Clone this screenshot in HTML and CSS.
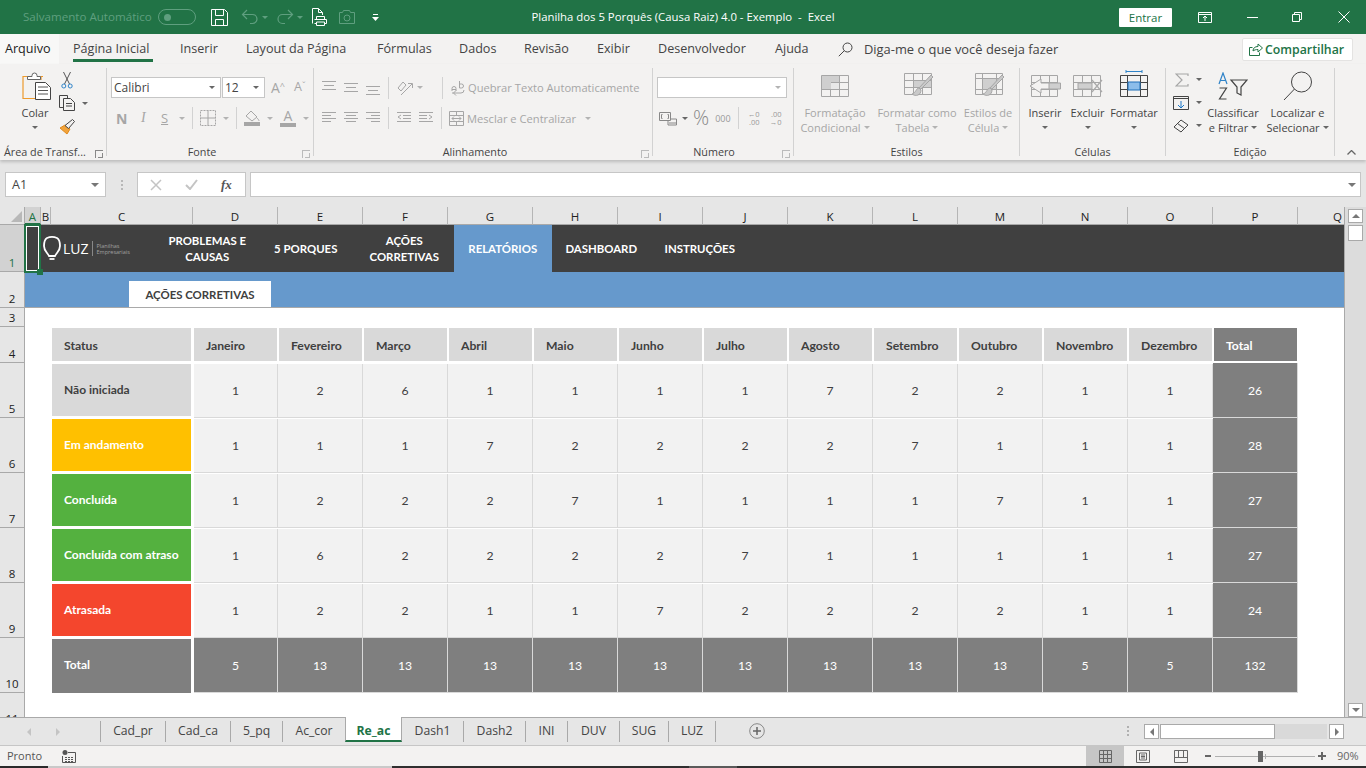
FILE: index.html
```html
<!DOCTYPE html>
<html lang="pt-BR">
<head>
    <meta charset="UTF-8">
    <title>Planilha dos 5 Porquês (Causa Raiz) 4.0 - Exemplo - Excel</title>
    <link rel="stylesheet" href="styles.css">
</head>
<body>
<div class="app">
    <!-- barra de titulo -->
    <header class="titlebar">
        <div class="qat">
            <span class="autosave">Salvamento Automático</span>
            <span class="toggle"><i></i></span>
            <svg class="q-save" width="17" height="17" viewBox="0 0 17 17" fill="none" stroke="#fff"><path d="M.5.5h13l3 3v13H.5z"/><path d="M4.500.5v6h8v-6M4.500 16.500v-6h8v6"/></svg>
            <svg class="q-undo" width="18" height="16" viewBox="0 0 18 16" fill="none" stroke="#5f9f7f" stroke-width="1.2"><path d="M6 1L1.500 5.500 6 10M1.500 5.500h10a4.500 4.500 0 0 1 0 9H9"/></svg>
            <span class="caret faded"></span>
            <svg class="q-redo" width="18" height="16" viewBox="0 0 18 16" fill="none" stroke="#5f9f7f" stroke-width="1.2"><path d="M12 1l4.500 4.500L12 10M16.500 5.500h-10a4.500 4.500 0 0 0 0 9H9"/></svg>
            <span class="caret faded"></span>
            <svg class="q-print" width="16" height="18" viewBox="0 0 16 18" fill="none" stroke="#fff"><path d="M.5 15.500V.5h6l4 4V7M6.500.5v4h4"/><path d="M4.500 8.500h8v3h-8zM2.500 11.500h12v4h-2M4.500 15.500h-2M4.500 14h8v3.500h-8z" fill="#217346"/></svg>
            <svg class="q-cam" width="16" height="14" viewBox="0 0 16 14" fill="none" stroke="#5f9f7f"><path d="M.5 2.500h3l1-2h6l1 2h4v11H.5z"/><circle cx="8" cy="8" r="3"/></svg>
            <svg class="q-more" width="7" height="7" viewBox="0 0 7 7" fill="#fff"><path d="M1 0h5v1H1zM0 3h7L3.500 7z"/></svg>
        </div>
        <div class="doc-title">Planilha dos 5 Porquês (Causa Raiz) 4.0 - Exemplo &nbsp;-&nbsp; Excel</div>
        <div class="win">
            <button class="signin">Entrar</button>
            <svg class="w-disp" width="14" height="11" viewBox="0 0 14 11" fill="none" stroke="#fff"><path d="M.5.5h13v10H.5zM.5 2.500h13M7 9V4.500M5 6l2-2 2 2"/></svg>
            <svg class="w-min" width="11" height="1" viewBox="0 0 11 1" stroke="#fff"><path d="M0 .5h11"/></svg>
            <svg class="w-max" width="10" height="10" viewBox="0 0 10 10" fill="none" stroke="#fff"><path d="M.5 2.500h7v7h-7zM2.500 2.500v-2h7v7h-2"/></svg>
            <svg class="w-close" width="12" height="12" viewBox="0 0 12 12" stroke="#fff"><path d="M.5.5l11 11M11.500.5l-11 11"/></svg>
        </div>
    </header>

    <!-- abas do ribbon -->
    <nav class="tabs">
        <a class="tab file">Arquivo</a>
        <a class="tab on">Página Inicial</a>
        <a class="tab">Inserir</a>
        <a class="tab">Layout da Página</a>
        <a class="tab">Fórmulas</a>
        <a class="tab">Dados</a>
        <a class="tab">Revisão</a>
        <a class="tab">Exibir</a>
        <a class="tab">Desenvolvedor</a>
        <a class="tab">Ajuda</a>
        <span class="tell">
            <svg width="15" height="15" viewBox="0 0 15 15" fill="none" stroke="#444"><circle cx="9.500" cy="5.500" r="4.500"/><path d="M6.300 8.700L.8 14.200"/></svg>
            Diga-me o que você deseja fazer
        </span>
        <button class="share">
            <svg width="14" height="13" viewBox="0 0 14 13" fill="none" stroke="#217346"><path d="M3.500 4.500H.5v8h10v-3"/><path d="M4 8c0-3 2-4.500 5-4.500V1l4.500 4-4.500 4V6.500C7 6.500 5 7 4 8z"/></svg>
            Compartilhar
        </button>
    </nav>

    <!-- ribbon -->
    <section class="ribbon">
        <div class="group g-clip">
            <div class="body">
                <div class="big paste">
                    <svg width="29" height="28" viewBox="0 0 29 28" fill="none"><path d="M8 4.500H1v22h13" stroke="#ed9a2d" stroke-width="1.200"/><path d="M21 4.500h-2V8" stroke="#ed9a2d" stroke-width="1.200"/><path d="M5.500 7.500h13v-3h-3.500v-1a2.500 2.500 0 0 0-5 0v1H5.500z" fill="#fff" stroke="#666"/><path d="M13.500 10.500h10l5 5v12h-15z" fill="#fff" stroke="#444"/><path d="M16 15h10M16 18.500h10M16 22h10" stroke="#555"/></svg>
                    <span class="lbl">Colar</span>
                    <span class="caret"></span>
                </div>
                <div class="clip-small">
                    <svg class="s-cut" width="12" height="17" viewBox="0 0 12 17" fill="none"><path d="M2.500 0l6 12M9.500 0l-6 12" stroke="#555"/><circle cx="2.800" cy="14" r="2" stroke="#2f83c8"/><circle cx="9.200" cy="14" r="2" stroke="#2f83c8"/></svg>
                    <span class="s-copy"><svg width="17" height="16" viewBox="0 0 17 16" fill="none" stroke="#444"><path d="M4.500 12.500H.5V.5h8v3"/><path d="M4.500 3.500h7l4 4v8h-11z" fill="#f3f2f1"/><path d="M7 8.500h6M7 11h6"/></svg><span class="caret"></span></span>
                    <svg class="s-brush" width="17" height="16" viewBox="0 0 17 16" fill="none"><path d="M1 9l7 6 3-5-5-4z" fill="#f2a33a" stroke="#e08a1e"/><path d="M6 6.500l3.500 3 6-7-2-2z" fill="#f3f2f1" stroke="#444"/></svg>
                </div>
            </div>
            <div class="glabel"><span>Área de Transf...</span><i class="launch"></i></div>
        </div>

        <div class="group g-font">
            <div class="body stack">
                <div class="row r-top">
                    <span class="combo c-font">Calibri<span class="caret"></span></span>
                    <span class="combo c-size">12<span class="caret"></span></span>
                    <span class="grow-a">A<sup>^</sup></span>
                    <span class="shrink-a">A<sup>ˇ</sup></span>
                </div>
                <div class="row r-bot font-tools">
                    <b class="t-n">N</b>
                    <em class="t-i">I</em>
                    <u class="t-s">S</u><span class="caret light"></span>
                    <i class="sep"></i>
                    <svg width="16" height="16" viewBox="0 0 16 16" fill="none" stroke="#a6a6a6"><path d="M.5.5h15v15H.5z" stroke-dasharray="2 1"/><path d="M8 .5v15M.5 8h15"/></svg><span class="caret light"></span>
                    <i class="sep"></i>
                    <span class="swatch"><svg width="16" height="12" viewBox="0 0 16 12" fill="none" stroke="#a6a6a6"><path d="M7 1l6 6-5 4-6-5zM13 8c1 1 2 2 2 3"/></svg><i></i></span><span class="caret light"></span>
                    <span class="swatch letter">A<i></i></span><span class="caret light"></span>
                </div>
            </div>
            <div class="glabel"><span>Fonte</span><i class="launch dim"></i></div>
        </div>

        <div class="group g-align">
            <div class="body stack">
                <div class="row r-top">
                    <svg class="al" width="14" height="16" viewBox="0 0 14 16" stroke="#a6a6a6"><path d="M0 1.500h14M2 5.500h10M0 9.500h14"/></svg>
                    <svg class="al" width="14" height="16" viewBox="0 0 14 16" stroke="#a6a6a6"><path d="M0 3.500h14M2 7.500h10M0 11.500h14"/></svg>
                    <svg class="al" width="14" height="16" viewBox="0 0 14 16" stroke="#a6a6a6"><path d="M0 6.500h14M2 10.500h10M0 14.500h14"/></svg>
                    <i class="sep"></i>
                    <svg class="orient" width="16" height="16" viewBox="0 0 16 16" fill="none" stroke="#a6a6a6"><path d="M1 8l5-6 3 3-5 6zM4 15L15 4M11 3.500h4.500V8"/></svg><span class="caret light"></span>
                    <i class="sep s-wrap"></i>
                    <span class="wide wrap">
                        <svg width="15" height="16" viewBox="0 0 15 16" fill="none" stroke="#a6a6a6"><path d="M1 11V8.500a2 2 0 0 1 4 0V11M1 9.500h4M8.500 1v7h2a2 2 0 0 0 0-4h-2M1 13h9a3 3 0 0 0 3-3M5 15.500L2.500 13 5 10.500"/></svg>
                        Quebrar Texto Automaticamente
                    </span>
                </div>
                <div class="row r-bot">
                    <svg class="al" width="14" height="14" viewBox="0 0 14 14" stroke="#a6a6a6"><path d="M0 1.500h14M0 4.500h9M0 7.500h14M0 10.500h9"/></svg>
                    <svg class="al" width="14" height="14" viewBox="0 0 14 14" stroke="#a6a6a6"><path d="M0 1.500h14M2 4.500h10M0 7.500h14M2 10.500h10"/></svg>
                    <svg class="al" width="14" height="14" viewBox="0 0 14 14" stroke="#a6a6a6"><path d="M0 1.500h14M5 4.500h9M0 7.500h14M5 10.500h9"/></svg>
                    <i class="sep"></i>
                    <svg class="ind" width="14" height="14" viewBox="0 0 14 14" fill="none" stroke="#a6a6a6"><path d="M0 1.500h14M6 4.500h8M6 7.500h8M0 10.500h14M4 4L1 6l3 2"/></svg>
                    <svg class="ind" width="14" height="14" viewBox="0 0 14 14" fill="none" stroke="#a6a6a6"><path d="M0 1.500h14M0 4.500h8M0 7.500h8M0 10.500h14M10 4l3 2-3 2"/></svg>
                    <i class="sep"></i>
                    <span class="wide merge">
                        <svg width="15" height="15" viewBox="0 0 15 15" fill="none" stroke="#a6a6a6"><path d="M.5.5h14v14H.5zM.5 4.500h14M.5 10.500h14M7.500.5v4M7.500 10.500v4M3 7.500h9M5 5.500l-2 2 2 2M10 5.500l2 2-2 2"/></svg>
                        Mesclar e Centralizar
                        <span class="caret light"></span>
                    </span>
                </div>
            </div>
            <div class="glabel"><span>Alinhamento</span><i class="launch dim"></i></div>
        </div>

        <div class="group g-num">
            <div class="body stack">
                <div class="row r-top"><span class="combo c-num"><span class="caret light"></span></span></div>
                <div class="row r-bot num-tools">
                    <svg width="18" height="15" viewBox="0 0 18 15" fill="none" stroke="#888"><path d="M.5 1.500h11v8H.5zM3.500 3.500h-1v4h1M8.500 3.500h1v4h-1M12 8h5.500v6H9v-4"/><path d="M10 12h7"/></svg><span class="caret"></span>
                    <span class="pct">%</span>
                    <span class="kilo">000</span>
                    <i class="sep"></i>
                    <span class="dec"><span>←0</span><span>.00</span></span>
                    <span class="dec"><span>.00</span><span>→0</span></span>
                </div>
            </div>
            <div class="glabel"><span>Número</span><i class="launch dim"></i></div>
        </div>

        <div class="group g-styles">
            <div class="body bigs">
                <div class="big off b-cond">
                    <svg width="28" height="22" viewBox="0 0 28 22" fill="none" stroke="#a6a6a6"><path d="M.5.500h27v21H.5zM.5 7.500h27M.5 14.500h27M9.500.5v21M18.500.5v21"/><path d="M1 1h17v6h-8v7H1z" fill="#cfcfcf" stroke="none"/><path d="M10 8h8v6h-8z" fill="#e8e8e8" stroke="none"/></svg>
                    <span class="lbl">Formatação</span>
                    <span class="lbl">Condicional<span class="caret light"></span></span>
                </div>
                <div class="big off b-table">
                    <svg width="30" height="25" viewBox="0 0 30 25" fill="none" stroke="#a6a6a6"><path d="M.5.500h27v21H.5zM.5 7.500h27M.5 14.500h27M9.500.5v21M18.500.5v21"/><path d="M10 8h17v6H10z" fill="#cfcfcf" stroke="none"/><path d="M29 4L17 16l-2-1L27 2zM15 15c-3 0-3 5-7 6 4 3 9 1 9-4z" fill="#c9c9c9"/></svg>
                    <span class="lbl">Formatar como</span>
                    <span class="lbl">Tabela<span class="caret light"></span></span>
                </div>
                <div class="big off b-cell">
                    <svg width="30" height="25" viewBox="0 0 30 25" fill="none" stroke="#a6a6a6"><path d="M.5.500h27v21H.5zM.5 5.500h27M.5 16.500h27M7.500.5v21M21.500.5v21"/><path d="M8 6h13v10H8z" fill="#cfcfcf" stroke="none"/><path d="M29 4L17 16l-2-1L27 2zM15 15c-3 0-3 5-7 6 4 3 9 1 9-4z" fill="#c9c9c9"/></svg>
                    <span class="lbl">Estilos de</span>
                    <span class="lbl">Célula<span class="caret light"></span></span>
                </div>
            </div>
            <div class="glabel"><span>Estilos</span></div>
        </div>

        <div class="group g-cells">
            <div class="body bigs">
                <div class="big b-ins">
                    <svg width="32" height="22" viewBox="0 0 32 22" fill="none" stroke="#a6a6a6"><path d="M2.500.5h26v21h-26zM2.500 7.500h26M2.500 14.500h26M11.500.5v21M20.500.5v21"/><path d="M12 8h19.500v6H12z" fill="#cfcfcf"/><path d="M12 4L1 11l11 7v-4h8V8h-8z" fill="#f3f2f1"/></svg>
                    <span class="lbl">Inserir</span>
                    <span class="caret"></span>
                </div>
                <div class="big b-del">
                    <svg width="30" height="22" viewBox="0 0 30 22" fill="none" stroke="#a6a6a6"><path d="M.5.5h27v21H.5zM.5 7.500h27M.5 14.500h27M9.500.5v21M18.500.5v21"/><path d="M5 8h14v6H5z" fill="#cfcfcf"/><path d="M19 5l10 12M29 5L19 17" stroke="#aaa" stroke-width="1.200"/></svg>
                    <span class="lbl">Excluir</span>
                    <span class="caret"></span>
                </div>
                <div class="big b-fmt">
                    <svg width="28" height="27" viewBox="0 0 28 27" fill="none" stroke="#444"><path d="M6 1.500h16M6 0v3M22 0v3" stroke="#2f83c8"/><path d="M.5 5.500h27v21H.5zM.5 12.500h27M.5 19.500h27M7.500 5.500v21M20.500 5.500v21"/><path d="M8 12h12v8H8z" fill="#8cbdea" stroke="#1e6fb8"/></svg>
                    <span class="lbl">Formatar</span>
                    <span class="caret"></span>
                </div>
            </div>
            <div class="glabel"><span>Células</span></div>
        </div>

        <div class="group g-edit">
            <div class="body bigs">
                <div class="edit-small">
                    <span class="e-row e-sum"><svg width="14" height="14" viewBox="0 0 14 14" fill="none" stroke="#a6a6a6" stroke-width="1.200"><path d="M13 3V1H1l6 6-6 6h12v-2"/></svg><span class="caret"></span></span>
                    <span class="e-row"><svg width="16" height="14" viewBox="0 0 16 14" fill="none"><path d="M.5.500h15v13H.5z" stroke="#444"/><path d="M.5 2.500h15" stroke="#444"/><path d="M8 5v7M5 9l3 3 3-3" stroke="#1e78c8"/></svg><span class="caret"></span></span>
                    <span class="e-row"><svg width="16" height="14" viewBox="0 0 16 14" fill="none" stroke="#444"><path d="M1 8l7-7 7 5-7 7zM4.500 4.500l7 5"/></svg><span class="caret"></span></span>
                </div>
                <div class="big b-sort">
                    <svg width="30" height="28" viewBox="0 0 30 28" fill="none"><path d="M1 12L5 1l4 11M2.500 8.500h5" stroke="#2f83c8" stroke-width="1.200"/><path d="M1.500 16h7l-7 11h7" stroke="#444" stroke-width="1.200"/><path d="M13 8h16l-6 7v8l-4-2v-6z" stroke="#444" stroke-width="1.200"/></svg>
                    <span class="lbl">Classificar</span>
                    <span class="lbl">e Filtrar<span class="caret"></span></span>
                </div>
                <div class="big b-find">
                    <svg width="30" height="30" viewBox="0 0 30 30" fill="none" stroke="#444"><circle cx="18.500" cy="11" r="10"/><path d="M11.500 18L1 29"/></svg>
                    <span class="lbl">Localizar e</span>
                    <span class="lbl">Selecionar<span class="caret"></span></span>
                </div>
            </div>
            <div class="glabel"><span>Edição</span></div>
        </div>

        <svg class="collapse" width="9" height="5" viewBox="0 0 9 5" fill="none" stroke="#666" stroke-width="1.300"><path d="M.5 4.500l4-4 4 4"/></svg>
    </section>

    <!-- barra de formulas -->
    <div class="formula">
        <span class="namebox">A1<span class="caret big-caret"></span></span>
        <span class="dots"></span>
        <span class="fxbox">
            <svg width="12" height="12" viewBox="0 0 12 12" stroke="#c4c4c4" stroke-width="1.500"><path d="M1 1l10 10M11 1L1 11"/></svg>
            <svg width="13" height="11" viewBox="0 0 13 11" fill="none" stroke="#c4c4c4" stroke-width="2"><path d="M1 6l4 4 7-9"/></svg>
            <em>fx</em>
        </span>
        <span class="fbar"><span class="caret big-caret"></span></span>
    </div>

    <!-- planilha -->
    <main class="workarea">
        <div class="sheet">
            <div class="corner"><i></i></div>
            <div class="ch sel">A</div><div class="ch">B</div><div class="ch">C</div><div class="ch">D</div><div class="ch">E</div><div class="ch">F</div><div class="ch">G</div><div class="ch">H</div><div class="ch">I</div><div class="ch">J</div><div class="ch">K</div><div class="ch">L</div><div class="ch">M</div><div class="ch">N</div><div class="ch">O</div><div class="ch">P</div><div class="ch">Q</div>

            <div class="rh sel">1</div>
            <div class="topnav">
                <div class="logo">
                    <svg width="18" height="26" viewBox="0 0 18 26" fill="none" stroke="#fff" stroke-width="1.800"><path d="M4 2C1.500 3.500 1 6 1 10c0 5 3.500 6.500 5 10h6c1.500-3.500 5-5 5-10 0-4-.5-6.500-3-8-3-1.300-7-1.300-10 0z"/><path d="M6.500 23h5"/></svg>
                    <span class="logo-name">LUZ</span>
                    <span class="logo-sub">Planilhas<br>Empresariais</span>
                </div>
                <a class="navitem">PROBLEMAS E CAUSAS</a>
                <a class="navitem">5 PORQUES</a>
                <a class="navitem">AÇÕES CORRETIVAS</a>
                <a class="navitem on">RELATÓRIOS</a>
                <a class="navitem">DASHBOARD</a>
                <a class="navitem">INSTRUÇÕES</a>
            </div>

            <div class="rh">2</div>
            <div class="subnav"><a class="subitem">AÇÕES CORRETIVAS</a></div>

            <div class="rh">3</div>
            <div class="blank"></div>

            <div class="rh">4</div>
            <div class="gut"></div>
            <div class="hd first-hd">Status</div>
            <div class="hd">Janeiro</div><div class="hd">Fevereiro</div><div class="hd">Março</div><div class="hd">Abril</div><div class="hd">Maio</div><div class="hd">Junho</div><div class="hd">Julho</div><div class="hd">Agosto</div><div class="hd">Setembro</div><div class="hd">Outubro</div><div class="hd">Novembro</div><div class="hd">Dezembro</div><div class="hd tot">Total</div>
            <div class="end"></div>

            <div class="rh">5</div>
            <div class="gut"></div>
            <div class="lab gray">Não iniciada</div>
            <div class="n m1">1</div><div class="n">2</div><div class="n">6</div><div class="n">1</div><div class="n">1</div><div class="n">1</div><div class="n">1</div><div class="n">7</div><div class="n">2</div><div class="n">2</div><div class="n">1</div><div class="n">1</div><div class="n t">26</div>
            <div class="end"></div>

            <div class="rh">6</div>
            <div class="gut"></div>
            <div class="lab orange">Em andamento</div>
            <div class="n m1">1</div><div class="n">1</div><div class="n">1</div><div class="n">7</div><div class="n">2</div><div class="n">2</div><div class="n">2</div><div class="n">2</div><div class="n">7</div><div class="n">1</div><div class="n">1</div><div class="n">1</div><div class="n t">28</div>
            <div class="end"></div>

            <div class="rh">7</div>
            <div class="gut"></div>
            <div class="lab green">Concluída</div>
            <div class="n m1">1</div><div class="n">2</div><div class="n">2</div><div class="n">2</div><div class="n">7</div><div class="n">1</div><div class="n">1</div><div class="n">1</div><div class="n">1</div><div class="n">7</div><div class="n">1</div><div class="n">1</div><div class="n t">27</div>
            <div class="end"></div>

            <div class="rh">8</div>
            <div class="gut"></div>
            <div class="lab green">Concluída com atraso</div>
            <div class="n m1">1</div><div class="n">6</div><div class="n">2</div><div class="n">2</div><div class="n">2</div><div class="n">2</div><div class="n">7</div><div class="n">1</div><div class="n">1</div><div class="n">1</div><div class="n">1</div><div class="n">1</div><div class="n t">27</div>
            <div class="end"></div>

            <div class="rh">9</div>
            <div class="gut"></div>
            <div class="lab red">Atrasada</div>
            <div class="n m1">1</div><div class="n">2</div><div class="n">2</div><div class="n">1</div><div class="n">1</div><div class="n">7</div><div class="n">2</div><div class="n">2</div><div class="n">2</div><div class="n">2</div><div class="n">1</div><div class="n">1</div><div class="n t">24</div>
            <div class="end"></div>

            <div class="rh">10</div>
            <div class="gut"></div>
            <div class="lab dark">Total</div>
            <div class="n t m1">5</div><div class="n t">13</div><div class="n t">13</div><div class="n t">13</div><div class="n t">13</div><div class="n t">13</div><div class="n t">13</div><div class="n t">13</div><div class="n t">13</div><div class="n t">13</div><div class="n t">5</div><div class="n t">5</div><div class="n t">132</div>
            <div class="end"></div>

            <div class="rh">11</div>
            <div class="blank"></div>

            <div class="selection"><i></i></div>
        </div>

        <div class="vscroll">
            <span class="sbtn"><i class="tri-up"></i></span>
            <span class="vthumb"></span>
            <span class="vtrack"></span>
            <span class="sbtn"><i class="tri-down"></i></span>
        </div>
    </main>

    <!-- abas das planilhas -->
    <div class="sheetbar">
        <div class="arrows"><i class="tri-left"></i><i class="tri-right"></i></div>
        <div class="sheets">
            <a class="st w65">Cad_pr</a>
            <a class="st w65">Cad_ca</a>
            <a class="st w52">5_pq</a>
            <a class="st w63">Ac_cor</a>
            <a class="st active">Re_ac</a>
            <a class="st w62">Dash1</a>
            <a class="st w62">Dash2</a>
            <a class="st w42">INI</a>
            <a class="st w52">DUV</a>
            <a class="st w49">SUG</a>
            <a class="st w47">LUZ</a>
        </div>
        <svg class="addsheet" width="16" height="16" viewBox="0 0 16 16" fill="none" stroke="#888"><circle cx="8" cy="8" r="7.300"/><path d="M8 4v8M4 8h8" stroke="#666" stroke-width="1.500"/></svg>
        <span class="vdots"></span>
        <div class="hscroll">
            <span class="sbtn"><i class="tri-left dk"></i></span>
            <span class="hthumb"></span>
            <span class="htrack"></span>
            <span class="sbtn"><i class="tri-right dk"></i></span>
        </div>
    </div>

    <!-- barra de status -->
    <footer class="status">
        <span class="ready">Pronto</span>
        <svg class="macro" width="14" height="13" viewBox="0 0 14 13" fill="none" stroke="#555"><circle cx="3" cy="2.500" r="2.500" fill="#555" stroke="none"/><path d="M6 2.500h7.500v10H.5V6"/><path d="M3 7.500h9M3 9.500h9M3 11.500h9" stroke-dasharray="2 1"/></svg>
        <div class="views">
            <span class="view on"><svg width="13" height="13" viewBox="0 0 13 13" fill="none" stroke="#666"><path d="M.5.500h12v12H.5zM.5 4.500h12M.5 8.500h12M4.500.5v12M8.500.5v12"/></svg></span>
            <span class="view"><svg width="14" height="13" viewBox="0 0 14 13" fill="none" stroke="#666"><path d="M.5.500h13v12H.5zM3.500 3h7v7h-7zM5 5h4M5 6.500h4M5 8h4"/></svg></span>
            <span class="view"><svg width="14" height="13" viewBox="0 0 14 13" fill="none" stroke="#666"><path d="M.5.500h13v12H.5zM.5 7.500h13M4.500.5v7M9.500.5v7"/></svg></span>
        </div>
        <div class="zoom">
            <i class="z-minus"></i>
            <span class="slider"><i class="z-tick"></i><i class="z-thumb"></i></span>
            <i class="z-plus"></i>
            <span class="z-val">90%</span>
        </div>
    </footer>
    <div class="taskedge"></div>
</div>
</body>
</html>
```

FILE: styles.css
```css
* { box-sizing: border-box; }
html, body { margin: 0; padding: 0; }
body { width: 1366px; height: 768px; overflow: hidden; background: #e6e6e6; font-family: "Open Sans", "Noto Sans", sans-serif; font-size: 12px; color: #444; }
svg { display: block; flex: none; }
i { display: block; }
button { font-family: inherit; border: 0; padding: 0; }
.app { width: 1366px; height: 768px; display: flex; flex-direction: column; overflow: hidden; }

.caret { display: inline-block; flex: none; width: 0; height: 0; border: 3px solid transparent; border-bottom-width: 0; border-top-color: #666; }
.caret.light { border-top-color: #b3b3b3; }
.caret.faded { border-top-color: #5f9f7f; }

/* titulo */
.titlebar { height: 34px; flex: none; background: #217346; display: flex; align-items: center; position: relative; }
.qat { display: flex; align-items: center; padding-left: 23px; }
.autosave { color: #5f9f7f; font-size: 11.600px; line-height: 16px; margin-top: -1px; width: 135px; white-space: nowrap; }
.toggle { width: 38px; height: 16px; border: 1px solid #5f9f7f; border-radius: 8px; display: flex; align-items: center; padding-left: 5px; }
.toggle i { width: 7px; height: 7px; border-radius: 50%; background: #5f9f7f; }
.q-save { margin-left: 15px; }
.q-undo { margin-left: 13px; }
.qat .caret { margin-left: 3px; }
.q-redo { margin-left: 8px; }
.q-print { margin-left: 9px; }
.q-cam { margin-left: 11px; }
.q-more { margin-left: 17px; }
.doc-title { position: absolute; left: 0; right: 0; top: 0; height: 34px; line-height: 33px; text-align: center; color: #fff; font-size: 11.350px; }
.win { margin-left: auto; display: flex; align-items: center; position: relative; }
.signin { width: 53px; height: 19px; background: #fff; color: #217346; font-size: 11.500px; border-radius: 1px; margin-right: 26px; }
.w-min { margin-left: 35px; }
.w-max { margin-left: 34px; }
.w-close { margin-left: 36px; margin-right: 16px; }

/* abas */
.tabs { height: 30px; flex: none; background: #f3f2f1; display: grid; grid-template-columns: 73px 107px 66px 131px 82px 65px 73px 61px 117px 63px 404px 1fr; align-items: center; position: relative; font-size: 12.600px; color: #444; }
.tab { height: 30px; line-height: 30px; position: relative; white-space: nowrap; justify-self: start; }
.tab.file { width: 59px; padding-left: 5px; background: #f8f8f7; color: #222; }
.tab.on { min-width: 80px; }
.tab.on::after { content: ""; position: absolute; left: 0; right: 0; bottom: 2px; height: 3px; background: #217346; }
.tell { display: flex; align-items: center; gap: 11px; white-space: nowrap; font-size: 12.900px; }
.share { width: 111px; height: 23px; background: #fff; border: 1px solid #e4e3e2; border-radius: 2px; color: #217346; font-size: 12.300px; font-weight: 600; display: flex; align-items: center; padding-left: 6px; gap: 2px; }

/* ribbon */
.ribbon { height: 96px; flex: none; padding: 4px 0; background: #f3f2f1; display: flex; position: relative; box-shadow: 0 2px 3px rgba(0,0,0,.18); z-index: 2; }
.group { display: flex; flex-direction: column; border-right: 1px solid #d2d2d2; flex: none; }
.g-clip { width: 107px; }
.g-font { width: 207px; }
.g-align { width: 339px; }
.g-num { width: 141px; }
.g-styles { width: 226px; }
.g-cells { width: 146px; }
.g-edit { width: 169px; }
.body { flex: 1; display: flex; min-height: 0; }
.stack { flex-direction: column; padding-top: 9px; }
.glabel { height: 12px; line-height: 15px; font-size: 10.800px; text-align: center; position: relative; white-space: nowrap; }
.launch { position: absolute; right: 3px; top: 6px; width: 8px; height: 8px; border-left: 1px solid #888; border-top: 1px solid #888; }
.launch::after { content: ""; position: absolute; right: 0; bottom: 0; width: 4px; height: 4px; border-right: 1px solid #888; border-bottom: 1px solid #888; }
.launch.dim, .launch.dim::after { border-color: #bbb; }
.g-clip .glabel { text-align: left; padding-left: 4px; }
.g-font .glabel, .g-align .glabel { padding-right: 16px; }
.g-num .glabel { padding-right: 18px; }

.row { display: flex; align-items: center; }
.r-top { height: 21px; }
.r-bot { height: 22px; margin-top: 9px; }
.sep { width: 1px; height: 22px; background: #d2d2d2; flex: none; }
.lbl { font-size: 11px; line-height: 15px; color: #444; white-space: nowrap; display: flex; align-items: center; gap: 3px; }
.big { display: flex; flex-direction: column; align-items: center; padding-top: 7px; }
.big > svg { margin-bottom: 8px; }
.big > .caret { margin-top: 6px; }
.big.off .lbl { color: #a6a6a6; }

.paste { width: 48px; padding-top: 4px; }
.paste > svg { margin-bottom: 5px; margin-left: 2px; }
.g-clip .body { padding-left: 11px; }
.clip-small { display: flex; flex-direction: column; padding-top: 4px; }
.s-cut { margin-left: 2px; margin-bottom: 6px; }
.s-copy { display: flex; align-items: center; gap: 6px; margin-bottom: 8px; }
.combo { height: 21px; background: #fff; border: 1px solid #c6c6c6; display: flex; align-items: center; justify-content: space-between; padding: 0 5px 0 2px; font-size: 12px; color: #444; }
.c-font { width: 110px; margin-left: 4px; }
.c-size { width: 43px; margin-left: 1px; }
.c-num { width: 130px; margin-left: 4px; justify-content: flex-end; }
.grow-a, .shrink-a { color: #a6a6a6; font-size: 14px; line-height: 1; display: flex; }
.shrink-a { font-size: 12.500px; }
.grow-a sup, .shrink-a sup { font-size: 9px; line-height: 1; }
.grow-a { margin-left: 6px; }
.shrink-a { margin-left: 9px; }
.font-tools { padding-left: 9px; color: #a6a6a6; }
.t-n { font-size: 14px; width: 12px; color: #a6a6a6; font-family: "Open Sans", sans-serif; }
.t-i { font-size: 14px; margin-left: 13px; width: 10px; font-family: "Liberation Serif", serif; }
.t-s { font-size: 13px; margin-left: 10px; width: 11px; }
.font-tools .caret { margin-left: 7px; }
.font-tools .sep { margin: 0 7px; }
.swatch { width: 16px; display: flex; flex-direction: column; align-items: center; }
.swatch i { width: 16px; height: 4px; background: #a6a6a6; }
.swatch.letter { margin-left: 7px; font-size: 14px; line-height: 12px; color: #a6a6a6; }
.swatch.letter i { margin-top: 1px; }

.g-align .stack { padding-left: 8px; }
.g-align .row { gap: 8px; }
.wide { display: flex; align-items: center; gap: 2px; color: #a6a6a6; font-size: 11.150px; white-space: nowrap; }
.wrap { margin-left: 0; }
.merge { margin-left: -1px; gap: 3px; }
.merge .caret { margin-left: 6px; }
.orient { margin-right: -4px; }
.s-wrap { margin-left: 11px; }

.num-tools { padding-left: 6px; color: #a6a6a6; }
.num-tools .caret { margin-left: 5px; }
.pct { font-size: 20px; font-weight: 300; line-height: 1; margin-left: 5px; color: #888; }
.kilo { font-size: 9px; margin-left: 6px; color: #999; }
.num-tools .sep { margin: 0 7px; }
.dec { display: flex; flex-direction: column; font-size: 7.500px; line-height: 8px; margin-right: 8px; color: #999; width: 14px; text-align: right; }

.bigs { position: relative; }
.b-cond { width: 82px; }
.b-table { width: 82px; }
.b-cell { width: 60px; }
.b-ins { width: 46px; margin-left: 2px; }
.b-del { width: 39px; }
.b-fmt { width: 54px; padding-top: 2px; }
.b-table, .b-cell { padding-top: 5px; }
.b-table > svg, .b-cell > svg { margin-bottom: 7px; margin-left: 3px; }
.edit-small { display: flex; flex-direction: column; padding-left: 7px; width: 34px; flex: none; }
.e-row { display: flex; align-items: center; gap: 7px; height: 23px; flex: none; }
.e-sum svg { margin-left: 2px; }
.b-sort { width: 66px; padding-top: 4px; flex: none; }
.b-sort > svg { margin-bottom: 5px; }
.b-find { width: 65px; padding-top: 3px; margin-left: -1px; flex: none; }
.b-find > svg { margin-bottom: 4px; }
.collapse { position: absolute; left: 1347px; top: 86px; }

/* formula */
.formula { height: 47px; flex: none; background: #e6e6e6; display: flex; padding: 12px 5px 10px; }
.namebox { width: 101px; background: #fff; border: 1px solid #c6c6c6; display: flex; align-items: center; justify-content: space-between; padding: 0 6px; font-size: 12.500px; color: #444; }
.big-caret { border-width: 4px; border-bottom-width: 0; border-top-color: #777; }
.dots { width: 2px; height: 12px; margin: 8px 14px 0 15px; background: repeating-linear-gradient(#b8b8b8 0 2px, transparent 2px 4px); flex: none; }
.fxbox { width: 109px; background: #fff; border: 1px solid #c6c6c6; display: flex; align-items: center; padding-left: 12px; gap: 23px; }
.fxbox em { font-family: "Liberation Serif", serif; font-size: 13px; font-weight: 700; color: #555; }
.fbar { width: 1111px; margin-left: 4px; background: #fff; border: 1px solid #c6c6c6; display: flex; align-items: center; justify-content: flex-end; padding-right: 4px; }

/* planilha */
.workarea { height: 510px; flex: none; display: flex; overflow: hidden; }
.sheet { width: 1345px; height: 510px; overflow: hidden; flex: none; background: #fff; border-right: 1px solid #a9a9a9; position: relative; display: grid; grid-template-columns: 25px 16px 10px 142px repeat(13, 85px) 80px; grid-template-rows: 18px 47px 36px 19px 36px 55px 55px 55px 55px 55px 55px 35px; font-family: Lato, "Open Sans", sans-serif; }
.corner { background: #e6e6e6; border-bottom: 1px solid #a9a9a9; border-right: 1px solid #a9a9a9; position: relative; }
.corner i { position: absolute; right: 2px; bottom: 2px; width: 0; height: 0; border-left: 11px solid transparent; border-bottom: 11px solid #b8b8b8; }
.ch { background: #e6e6e6; border-bottom: 1px solid #a9a9a9; border-right: 1px solid #b5b5b5; text-align: center; font-family: "Open Sans", sans-serif; font-size: 11.500px; line-height: 19px; color: #222; }
.ch.sel { background: #d2d2d2; color: #217346; border-bottom: 2px solid #217346; }
.rh { background: #e6e6e6; border-bottom: 1px solid #a9a9a9; border-right: 1px solid #a9a9a9; display: flex; align-items: flex-end; justify-content: center; font-family: "Open Sans", sans-serif; font-size: 11.500px; line-height: 16px; color: #222; }
.rh.sel { background: #d2d2d2; color: #217346; }
.topnav { grid-column: 2 / -1; background: #404040; display: flex; }
.logo { width: 133px; flex: none; display: flex; align-items: center; padding: 0 0 0 18px; color: #fff; }
.logo-name { font-family: "Open Sans", sans-serif; font-weight: 400; font-size: 14px; margin-left: 2px; padding-right: 3px; border-right: 1px solid #888; line-height: 15px; }
.logo-sub { font-family: "Open Sans", sans-serif; font-size: 5.500px; line-height: 6px; color: #a0a0a0; margin-left: 4px; white-space: nowrap; }
.navitem { width: 98.500px; flex: none; display: flex; align-items: center; justify-content: center; text-align: center; color: #fff; font-weight: 700; font-size: 11.400px; line-height: 16px; padding: 0 8px 0 8px; margin-top: 1px; }
.navitem.on { background: #6699cc; margin-top: 0; padding-top: 1px; }
.subnav { grid-column: 2 / -1; background: #6699cc; border-bottom: 1px solid #a9a9a9; display: flex; align-items: flex-end; padding-left: 104px; }
.subitem { width: 142px; height: 26px; background: #fff; text-align: center; line-height: 27px; font-weight: 700; font-size: 11.400px; color: #404040; }
.blank { grid-column: 2 / -1; }
.gut { grid-column: span 2; }
.end { background: #fff; }
.hd { margin: 1px 1px 2px; background: #d9d9d9; display: flex; align-items: center; padding-left: 12px; padding-top: 1px; font-weight: 700; font-size: 12.200px; color: #404040; white-space: nowrap; }
.hd.first-hd { margin-right: 2px; }
.hd.tot { background: #7f7f7f; color: #fff; }
.lab { margin: 1px 2px 2px 1px; display: flex; align-items: center; padding-left: 12px; padding-bottom: 1px; font-weight: 700; font-size: 12px; color: #fff; }
.gray { background: #d9d9d9; color: #404040; }
.orange { background: #ffc000; }
.green { background: #54b13f; }
.red { background: #f4462d; }
.dark { background: #7f7f7f; margin-bottom: 0; padding-bottom: 3px; }
.n { background: #f2f2f2; border-right: 1px solid #d9d9d9; border-bottom: 1px solid #d9d9d9; margin-top: 1px; display: flex; align-items: center; justify-content: center; font-size: 12.200px; color: #404040; }
.n.m1 { margin-left: 1px; }
.n.t { background: #7f7f7f; color: #fff; margin-top: 0; }
.selection { position: absolute; left: 24px; top: 17px; width: 17px; height: 49px; border: 2px solid #217346; box-shadow: inset 0 0 0 1px #fff; }
.selection i { position: absolute; right: -4px; bottom: -4px; width: 6px; height: 6px; background: #217346; }

.vscroll { width: 21px; height: 510px; background: #dcdcdc; display: flex; flex-direction: column; align-items: center; padding-top: 2px; flex: none; }
.sbtn { width: 15px; height: 14px; background: #fff; border: 1px solid #a9a9a9; display: flex; align-items: center; justify-content: center; flex: none; }
.vthumb { width: 15px; height: 16px; margin-top: 2px; background: #fff; border: 1px solid #a9a9a9; flex: none; }
.vtrack { height: 462px; flex: none; }
.tri-up { width: 0; height: 0; border: 4px solid transparent; border-top: 0; border-bottom: 4px solid #777; }
.tri-down { width: 0; height: 0; border: 4px solid transparent; border-bottom: 0; border-top: 4px solid #777; }
.tri-left { width: 0; height: 0; border: 4px solid transparent; border-left: 0; border-right: 4px solid #c4c4c4; }
.tri-right { width: 0; height: 0; border: 4px solid transparent; border-right: 0; border-left: 4px solid #c4c4c4; }
.tri-left.dk { border-right-color: #777; }
.tri-right.dk { border-left-color: #777; }

/* abas das planilhas */
.sheetbar { height: 28px; flex: none; background: #e6e6e6; border-top: 1px solid #a9a9a9; display: flex; align-items: flex-start; position: relative; width: 1366px; }
.arrows { width: 100px; height: 27px; display: flex; align-items: center; padding-left: 27px; gap: 25px; flex: none; }
.sheets { display: flex; border-left: 1px solid #a9a9a9; margin-top: 3px; height: 21px; flex: none; }
.st { border-right: 1px solid #a9a9a9; text-align: center; line-height: 20px; font-family: "Open Sans", sans-serif; font-size: 12.200px; color: #444; flex: none; }
.w65 { width: 65px; }
.w52 { width: 52px; }
.w63 { width: 63px; }
.w62 { width: 62px; }
.w42 { width: 42px; }
.w49 { width: 49px; }
.w47 { width: 47px; }
.st.active { width: 57px; height: 25px; margin-top: -4px; line-height: 27px; background: #fff; color: #217346; font-weight: 700; border-left: 1px solid #a9a9a9; border-right: 1px solid #a9a9a9; border-bottom: 2px solid #217346; margin-left: -1px; }
.addsheet { margin-left: 33px; margin-top: 5px; }
.vdots { width: 2px; height: 10px; margin: 8px 0 0 362px; background: repeating-linear-gradient(#b0b0b0 0 2px, transparent 2px 4px); flex: none; }
.hscroll { display: flex; align-items: center; height: 15px; margin: 6px 0 0 15px; flex: none; }
.hscroll .sbtn { width: 15px; height: 15px; }
.hthumb { width: 115px; height: 15px; margin-left: 1px; background: #fff; border: 1px solid #a9a9a9; }
.htrack { width: 52px; height: 15px; background: #d9d9d9; }
.hscroll .sbtn:last-child { margin-left: 2px; }

/* status */
.status { height: 21px; flex: none; background: #f3f2f1; border-top: 1px solid #c6c6c6; display: flex; align-items: center; font-size: 11px; color: #555; }
.ready { margin-left: 7px; width: 55px; line-height: 15px; margin-top: -1px; }
.views { margin-left: auto; display: flex; align-self: stretch; }
.view { width: 38px; display: flex; align-items: center; justify-content: center; }
.view.on { background: #c6c6c6; }
.zoom { display: flex; align-items: center; padding-left: 5px; width: 166px; }
.z-minus { width: 6px; height: 2px; background: #666; }
.slider { width: 100px; height: 1px; background: #b0b0b0; margin-left: 4px; position: relative; }
.z-thumb { position: absolute; left: 43px; top: -5px; width: 5px; height: 11px; background: #666; }
.z-tick { position: absolute; left: 50px; top: -2px; width: 1px; height: 5px; background: #b0b0b0; }
.z-plus { width: 8px; height: 2px; background: #666; margin-left: 3px; position: relative; }
.z-plus::after { content: ""; position: absolute; left: 3px; top: -3px; width: 2px; height: 8px; background: #666; }
.z-val { margin-left: 11px; font-size: 11px; line-height: 15px; margin-top: -1px; color: #666; }
.taskedge { height: 2px; flex: none; background: linear-gradient(90deg, #2a2a2a 48px, #c9c9c9 48px 392px, #2f2f2f 392px 689px, #5a5a5a 689px 737px, #2f2f2f 737px); }
```
